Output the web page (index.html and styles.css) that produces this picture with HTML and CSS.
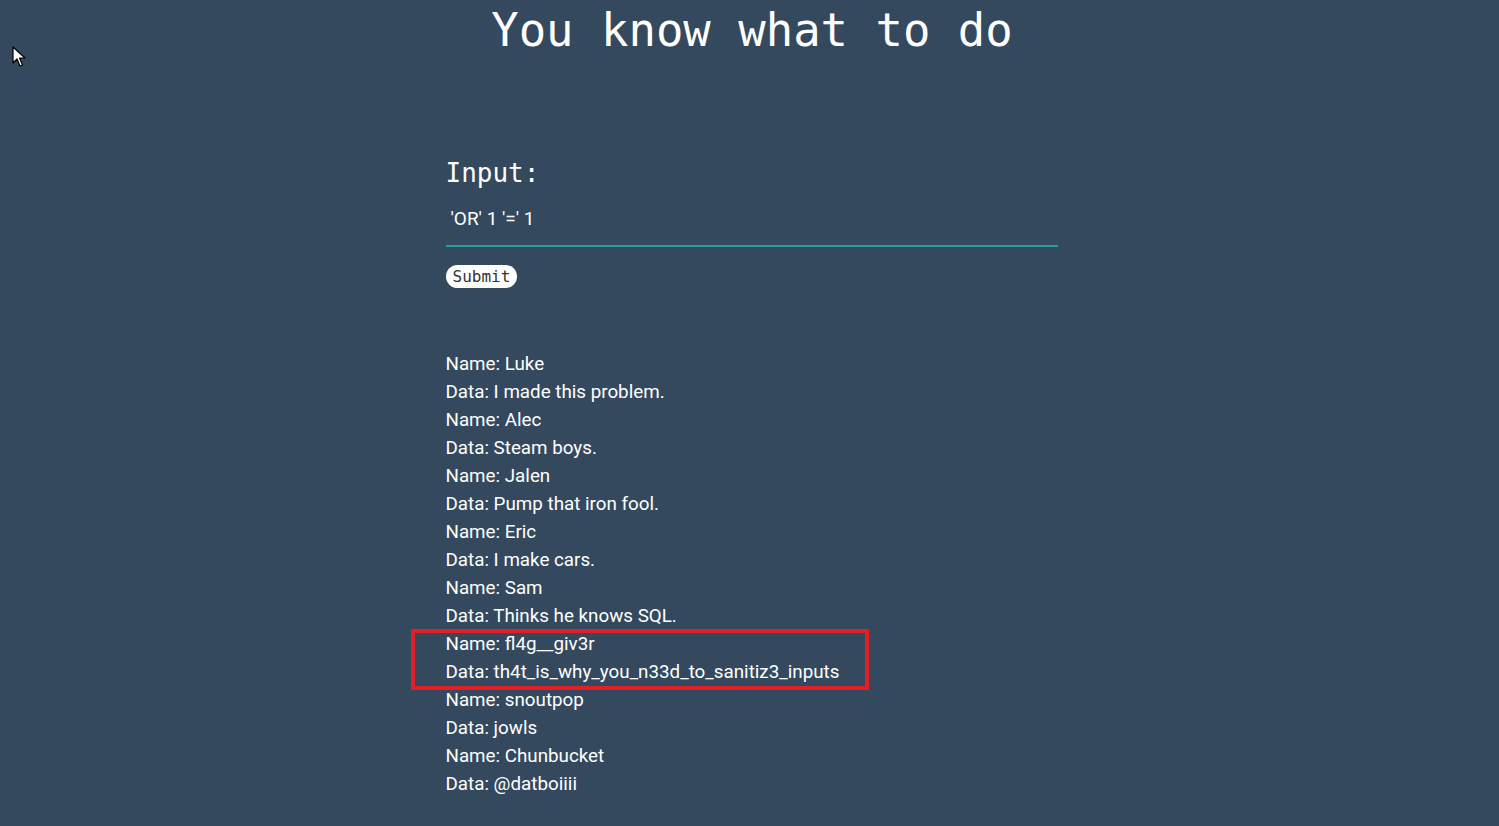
FILE: index.html
```html
<!DOCTYPE html>
<html lang="en">
<head>
<meta charset="utf-8">
<title>You know what to do</title>
<link rel="stylesheet" href="styles.css">
</head>
<body>
<svg class="cursor" width="14" height="22" viewBox="0 0 14 22" aria-hidden="true">
  <path d="M1 1 L1 17 L5 13 L8 20 L10.5 19 L7.5 12 L13 12 Z" fill="#fff" stroke="#000" stroke-width="1.2" stroke-linejoin="round"/>
</svg>
<h1 class="title">You know what to do</h1>
<main class="panel">
  <form class="query">
    <label class="label" for="q">Input:</label>
    <input class="field" id="q" type="text" value="'OR' 1 '=' 1">
    <button class="submit" type="button">Submit</button>
  </form>
  <div class="results">
    <div class="row">Name: Luke</div>
    <div class="row">Data: I made this problem.</div>
    <div class="row">Name: Alec</div>
    <div class="row">Data: Steam boys.</div>
    <div class="row">Name: Jalen</div>
    <div class="row">Data: Pump that iron fool.</div>
    <div class="row">Name: Eric</div>
    <div class="row">Data: I make cars.</div>
    <div class="row">Name: Sam</div>
    <div class="row">Data: Thinks he knows SQL.</div>
    <div class="flag">
      <div class="row">Name: fl4g__giv3r</div>
      <div class="row">Data: th4t_is_why_you_n33d_to_sanitiz3_inputs</div>
    </div>
    <div class="row">Name: snoutpop</div>
    <div class="row">Data: jowls</div>
    <div class="row">Name: Chunbucket</div>
    <div class="row">Data: @datboiiii</div>
  </div>
</main>
</body>
</html>
```

FILE: styles.css
```css
html, body {
  margin: 0;
  padding: 0;
  background: #34495e;
  color: #ffffff;
  height: 100%;
  overflow: hidden;
}

body {
  font-family: Roboto, "Liberation Sans", sans-serif;
  position: relative;
}

.cursor {
  position: absolute;
  left: 12px;
  top: 46px;
}

.title {
  margin: 0;
  font-family: "DejaVu Sans Mono", monospace;
  font-weight: normal;
  font-size: 45.6px;
  line-height: 62px;
  text-align: center;
  padding-left: 5px;
}

.panel {
  width: 612px;
  margin-left: calc(50% - 304px);
  padding-top: 93px;
}

.query {
  display: flex;
  flex-direction: column;
  align-items: flex-start;
}

.label {
  font-family: "DejaVu Sans Mono", monospace;
  font-size: 26px;
  line-height: 36px;
}

.field {
  box-sizing: border-box;
  width: 100%;
  height: 56px;
  padding: 0 5px;
  margin: 0;
  border: none;
  border-bottom: 2px solid #1fa698;
  background: transparent;
  color: #ffffff;
  font-family: Roboto, "Liberation Sans", sans-serif;
  font-size: 19px;
  outline: none;
}

.submit {
  margin-top: 18px;
  height: 23px;
  padding: 0 7px;
  border: none;
  border-radius: 12px;
  background: #ffffff;
  color: #333333;
  font-family: "DejaVu Sans Mono", monospace;
  font-size: 16px;
  line-height: 23px;
}

.results {
  margin-top: 62px;
  font-size: 18.8px;
  line-height: 28px;
}

.flag {
  position: relative;
}

.flag::after {
  content: "";
  position: absolute;
  left: -35px;
  top: -1px;
  width: 458px;
  height: 61px;
  box-sizing: border-box;
  border: 4px solid #e41e26;
  pointer-events: none;
}
```
